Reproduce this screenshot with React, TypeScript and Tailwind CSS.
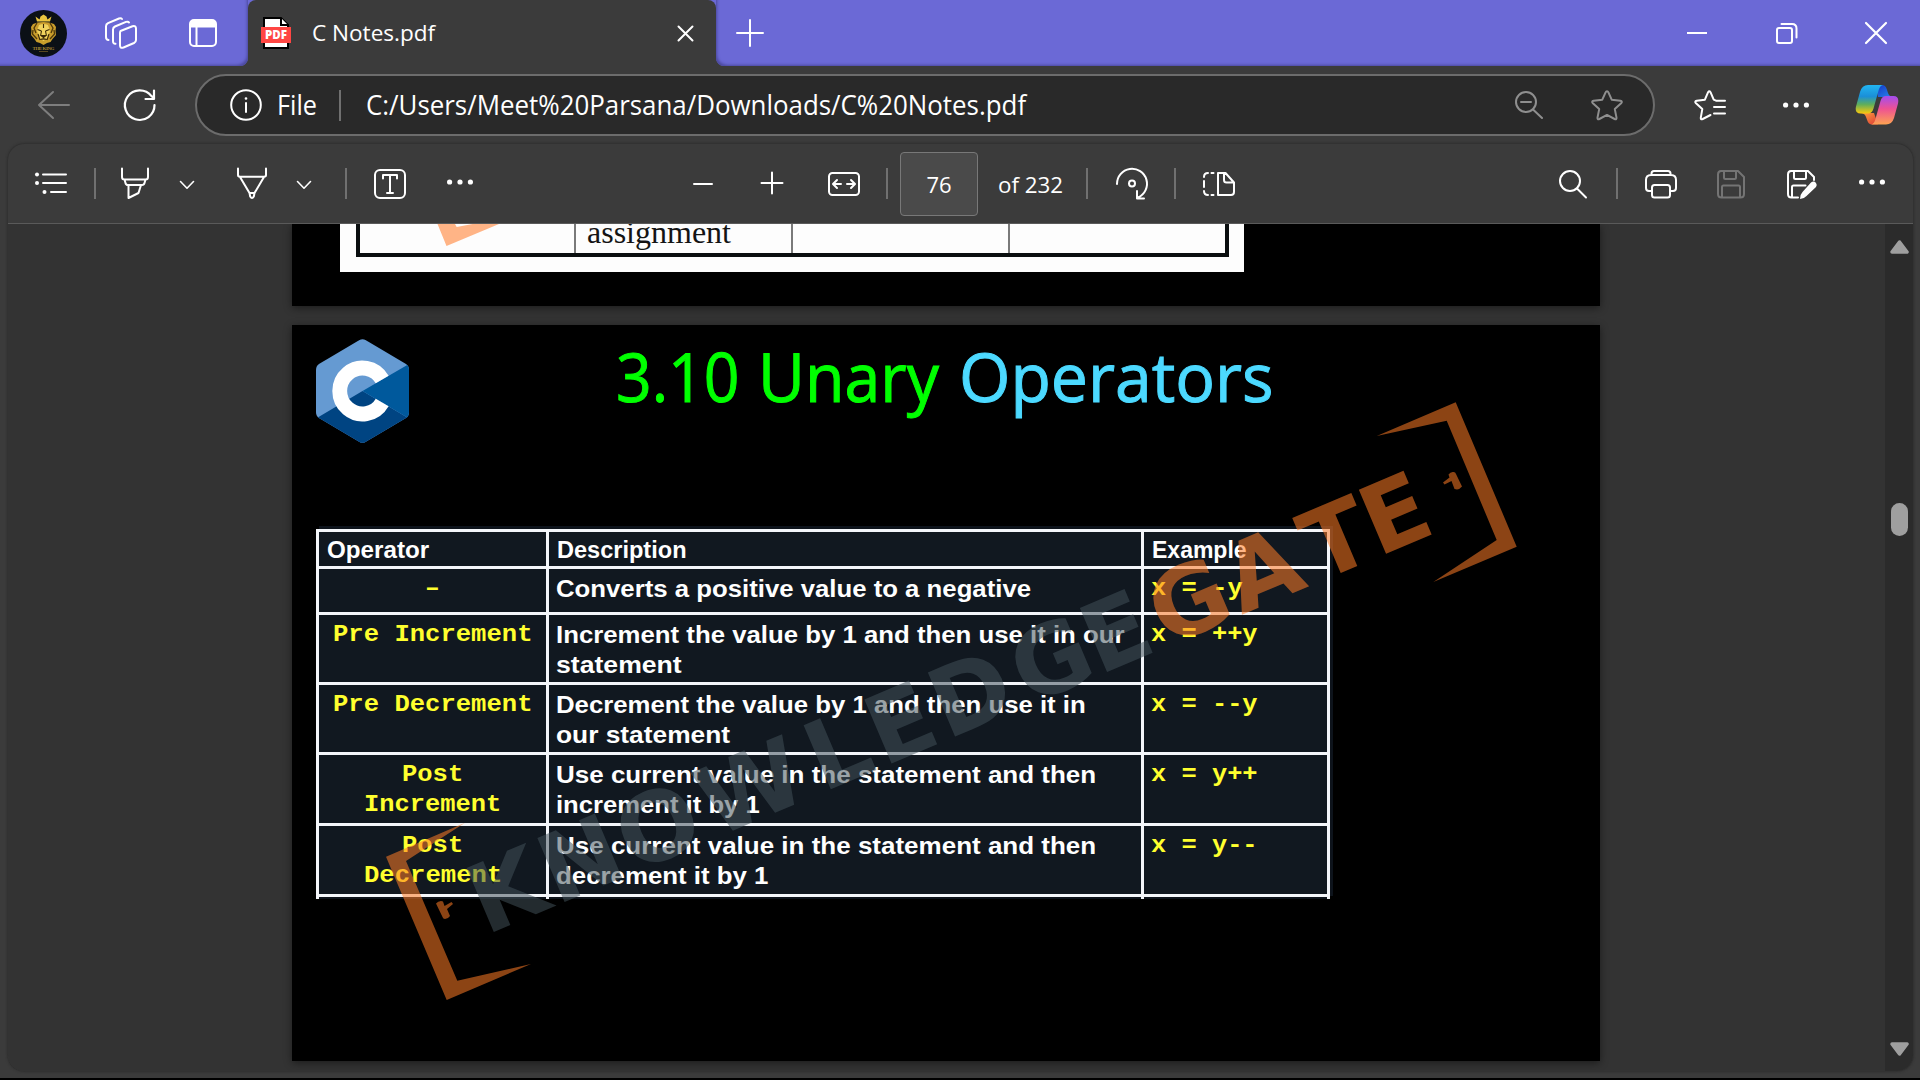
import { useLayoutEffect, useRef, useState, type ReactNode } from "react";

/* Text stretched horizontally so that it fills exactly `w` pixels. */
function Fit({ w, className = "", children }: { w: number; className?: string; children: ReactNode }) {
  const ref = useRef<HTMLSpanElement>(null);
  const [scale, setScale] = useState(1);
  useLayoutEffect(() => {
    if (ref.current && ref.current.offsetWidth) setScale(w / ref.current.offsetWidth);
  }, [w]);
  return (
    <span className={`block shrink-0 ${className}`} style={{ width: w }}>
      <span ref={ref} className="inline-block origin-left whitespace-nowrap" style={{ transform: `scaleX(${scale})` }}>
        {children}
      </span>
    </span>
  );
}

function Icon({
  w,
  h,
  className = "",
  sw = 2,
  children,
}: {
  w: number;
  h: number;
  className?: string;
  sw?: number;
  children: ReactNode;
}) {
  return (
    <svg
      width={w}
      height={h}
      viewBox={`0 0 ${w} ${h}`}
      fill="none"
      stroke="currentColor"
      strokeWidth={sw}
      strokeLinecap="round"
      strokeLinejoin="round"
      className={`shrink-0 overflow-visible ${className}`}
    >
      {children}
    </svg>
  );
}

function Dots({ className = "" }: { className?: string }) {
  return (
    <Icon w={26} h={6} className={className}>
      <g fill="currentColor" stroke="none">
        <circle cx="2.6" cy="3" r="2.6" />
        <circle cx="13" cy="3" r="2.6" />
        <circle cx="23.4" cy="3" r="2.6" />
      </g>
    </Icon>
  );
}

function Sep({ className = "" }: { className?: string }) {
  return <div className={`h-[31px] w-[2px] shrink-0 bg-[#707070] ${className}`} />;
}

function Avatar() {
  return (
    <svg width="47" height="47" viewBox="0 0 47 47" className="ml-5 shrink-0">
      <circle cx="23.5" cy="23.5" r="23.5" fill="#0b1016" />
      <path d="M15.500 6.500l4 3 1-3 3-2 3 2 1 3 4-3-1.500 5H17z" fill="#e9c53f" />
      <path
        d="M13 14q4-2 10.500-2t10.500 2l2 3-.5 4 .5 4-3.500 4-2 3-3.500 1-3.500 2-3.500-2-3.500-1-2-3-3.500-4 .5-4-.5-4z"
        fill="#c99d2c"
      />
      <path d="M13 20l-.5 4 4.500 5M34 20l.5 4-4.500 5M17 13l-3 5 2 5M30 13l3 5-2 5" stroke="#4d380b" strokeWidth="1.300" fill="none" />
      <path d="M19 15q4.500-2 9 0l2 6-2.500 7-4 3-4-3-2.500-7z" fill="#f0d35e" />
      <path
        d="M17.500 19.500l4 1.500M29.500 19.500l-4 1.500M23.500 14v4M21.500 21l-.8 4M25.500 21l.8 4M21 25.500h5l-2.500 2zM20.500 29.500q3-1.500 6 0M18 24l2 6M29 24l-2 6"
        stroke="#3a2908"
        strokeWidth="1.100"
        fill="#3a2908"
      />
      <text x="23.500" y="40" textAnchor="middle" fontSize="5" fontWeight="700" fontFamily="Liberation Serif, serif" fill="#a68330" textLength="22">
        THE KING
      </text>
      <path d="M19 41.500h9" stroke="#6b5524" strokeWidth=".8" />
    </svg>
  );
}

function PdfIcon() {
  return (
    <svg width="30" height="32" viewBox="0 0 30 32" className="ml-[13px] shrink-0">
      <path d="M3 1h17l7 7v23H3z" fill="#fff" stroke="#000" strokeWidth="2" />
      <path d="M20 1v7h7" fill="#fff" stroke="#000" strokeWidth="2" />
      <path d="M0 10h30v16H0z" fill="#ff4643" />
      <text x="15" y="22.300" textAnchor="middle" fontSize="11.500" fontWeight="800" fontFamily="Open Sans, sans-serif" fill="#fff" textLength="22">
        PDF
      </text>
    </svg>
  );
}

function Copilot() {
  return (
    <svg width="44" height="40" viewBox="0 0 44 40" className="ml-[46px] shrink-0">
      <defs>
        <linearGradient id="cpBlue" x1="0" y1="0" x2="0" y2="1">
          <stop offset="0" stopColor="#22b5f2" />
          <stop offset=".4" stopColor="#1a8fd8" />
          <stop offset=".68" stopColor="#5fae5c" />
          <stop offset="1" stopColor="#fbc90c" />
        </linearGradient>
        <linearGradient id="cpPink" x1="0" y1="0" x2="0" y2="1">
          <stop offset="0" stopColor="#a34df0" />
          <stop offset=".45" stopColor="#ee5293" />
          <stop offset="1" stopColor="#fda351" />
        </linearGradient>
        <linearGradient id="cpNavy" x1="0" y1="0" x2="1" y2="1">
          <stop offset="0" stopColor="#1636c4" />
          <stop offset="1" stopColor="#2787ee" />
        </linearGradient>
        <linearGradient id="cpRed" x1="0" y1="0" x2="1" y2="1">
          <stop offset="0" stopColor="#ffa23c" />
          <stop offset="1" stopColor="#dc3a38" />
        </linearGradient>
      </defs>
      <path d="M21 0h6q3.500 0 4.700 4l1.300 4q1 3.500 5 4H23z" fill="url(#cpNavy)" />
      <path d="M23 39.500h-6q-3.500 0-4.700-4L11 32q-1-3.500-5-4h13z" fill="url(#cpRed)" />
      <path d="M13 0h15q-3 .5-4.300 5L18.500 23.500q-1.400 5-5.500 5H5.500Q-.5 28.500 1 21.500L5 7Q7 0 13 0z" fill="url(#cpBlue)" />
      <path d="M31 39.500H16q3-.5 4.300-5L25.500 16q1.400-5 5.500-5h7.500q6 0 4.500 7.500L39 33q-2 6.500-8 6.500z" fill="url(#cpPink)" />
    </svg>
  );
}

function TabStrip() {
  return (
    <header className="flex h-[66px] shrink-0 items-center bg-[#3b3b3b]">
      <div className="flex h-full w-[248px] shrink-0 items-center rounded-br-[8px] bg-[#6b69d6] shadow-[inset_-3px_-3px_3px_-2px_#4a489c]">
        <Avatar />
        <Icon w={32} h={32} className="ml-[38px]">
          <path d="M15.500 14L27.500 9.300q3.500-1 3.500 2.200V23q0 2-2 3L18.500 30.500q-3.500 1.200-3.500-2V16q0-1.200.5-2z" />
          <path d="M24 5.500q-.8-1.300-3-.6L10 9.500q-2 1-2 3V24q0 3 2.500 2.800" />
          <path d="M17 2q-1-1.300-3-.5L3 6.200q-2 1-2 3V20q0 2.800 2.500 3" />
        </Icon>
        <Icon w={28} h={28} className="ml-[52px]">
          <rect x="1" y="1" width="26" height="26" rx="4" />
          <path d="M1 7.500V5q0-4 4-4h18q4 0 4 4v2.500z" fill="currentColor" stroke="none" />
          <path d="M1 7.500h26M7.500 8v19" />
        </Icon>
      </div>
      <div className="-mr-[12px] h-[12px] w-[12px] shrink-0 self-start bg-[#6b69d6]">
        <div className="h-full w-full rounded-tl-[8px] bg-[#3b3b3b]" />
      </div>
      <div className="flex h-full w-[468px] shrink-0 items-center">
        <PdfIcon />
        <Fit w={123} className="mb-[2px] ml-[21px] text-[22px] leading-[30px]">
          C Notes.pdf
        </Fit>
        <Icon w={15} h={15} className="ml-[243px]">
          <path d="M.5.500l14 14M14.500.500l-14 14" />
        </Icon>
      </div>
      <div className="-ml-[12px] h-[12px] w-[12px] shrink-0 self-start bg-[#6b69d6]">
        <div className="h-full w-full rounded-tr-[8px] bg-[#3b3b3b]" />
      </div>
      <div className="flex h-full grow items-center rounded-bl-[8px] bg-[#6b69d6] shadow-[inset_3px_-3px_3px_-2px_#4a489c]">
        <Icon w={26} h={26} className="ml-[21px]">
          <path d="M13 0v26M0 13h26" />
        </Icon>
        <Icon w={20} h={20} className="ml-auto">
          <path d="M0 10h20" strokeLinecap="butt" />
        </Icon>
        <Icon w={21} h={20} className="ml-[69px]">
          <rect x="1" y="5" width="15" height="15" rx="2" />
          <path d="M5.500 1H16q4.500 0 4.500 4.500v9" />
        </Icon>
        <Icon w={20} h={20} className="ml-[69px] mr-[34px]" sw={2.2}>
          <path d="M0 0l20 20M20 0L0 20" />
        </Icon>
      </div>
    </header>
  );
}

function AddressBar() {
  return (
    <div className="flex h-[78px] shrink-0 items-center bg-[#3b3b3b]">
      <Icon w={32} h={28} className="ml-[38px] text-[#7e7e7e]">
        <path d="M31 14H1M15 1L1 14l14 13" />
      </Icon>
      <Icon w={32} h={32} className="ml-[54px]" sw={2.2}>
        <path d="M30.500 16A14.800 14.800 0 1 1 27.500 7.200l2.500 2M30 1.500V10h-8.500" />
      </Icon>
      <div className="ml-[39px] flex h-[62px] w-[1460px] shrink-0 items-center rounded-full border-2 border-[#6c6c6c] bg-[#292929]">
        <Icon w={32} h={32} className="ml-[33px]">
          <circle cx="16" cy="16" r="14.800" />
          <path d="M16 14v9" />
          <circle cx="16" cy="9.500" r=".6" fill="currentColor" strokeWidth="1.500" />
        </Icon>
        <Fit w={40} className="ml-[15px] text-[26.500px] leading-[36px]">
          File
        </Fit>
        <Sep className="ml-[22px]" />
        <Fit w={660} className="ml-[25px] text-[26.500px] leading-[36px]">
          C:/Users/Meet%20Parsana/Downloads/C%20Notes.pdf
        </Fit>
        <Icon w={28} h={28} className="ml-auto text-[#8f8f8f]">
          <circle cx="11" cy="11" r="10" />
          <path d="M18 18.500l9 8.500M6 11h10" />
        </Icon>
        <Icon w={32} h={31} className="ml-[48px] mr-[30px] text-[#8f8f8f]">
          <path d="M16 1.200q.9 0 1.300 1l3.400 7.500 8.700 1.100q2.500.6.700 2.400l-6.300 5.900 1.700 8.500q.2 2.300-1.900 1.400L16 24.900 8.400 29q-2.100.9-1.900-1.400l1.700-8.500-6.300-5.900q-1.800-1.800.7-2.400l8.700-1.100 3.400-7.500q.4-1 1.300-1z" />
        </Icon>
      </div>
      <Icon w={32} h={31} className="ml-[39px]">
        <path d="M16.500 25L8.700 29q-2.200.9-1.900-1.400l1.500-8.500-6.300-5.900q-1.800-1.800.7-2.400l8.200-1.100 3.200-7.500q1.200-2 2.400 0l3.200 7.500 2.300 1H31M20 17h11M20 23.500h11" />
      </Icon>
      <Dots className="ml-[57px]" />
      <Copilot />
    </div>
  );
}

function Chevron({ className = "" }: { className?: string }) {
  return (
    <Icon w={14} h={8} sw={1.600} className={className}>
      <path d="M.5.500L7 7.200 13.500.500" />
    </Icon>
  );
}

const DISK = "M4 1h17l6 6v17q0 3.500-3.500 3.500h-19Q1 27.500 1 24V4.500Q1 1 4 1zM7 1v6.500q0 1.500 1.500 1.500h9Q19 9 19 7.500V1M5 27V17q0-1.500 1.500-1.500h15q1.500 0 1.500 1.500v10";

function Toolbar() {
  return (
    <div className="flex h-[80px] shrink-0 items-center border-b border-[#5a5a5a]">
      <Icon w={32} h={22} className="mb-[2px] ml-[27px]">
        <path d="M8 2.500h23M8 11h23M16 20h15" />
        <g fill="currentColor" stroke="none">
          <circle cx="2" cy="2.500" r="2" />
          <circle cx="2" cy="11" r="2" />
          <circle cx="9.500" cy="20" r="2" />
        </g>
      </Icon>
      <Sep className="ml-[27px]" />
      <Icon w={28} h={31} className="ml-[25px]">
        <path d="M1 .5V9q0 2.500 2.500 2.500h21Q27 11.500 27 9V.5M3.500 11.500l1 3.500q.4 2 2.500 2h14q2 0 2.500-2l1-3.500M7.500 17v13l10-5 2.500-8" />
      </Icon>
      <Chevron className="ml-[31px] mt-[2px]" />
      <Icon w={30} h={31} className="ml-[43px]">
        <path d="M1 .5V7q0 1.800 2 1.800h24Q29 8.800 29 7V.5M3 9l9.500 16h5L27 9M12.500 25l.7 3.500q1.800 3 3.600 0l.7-3.500" />
      </Icon>
      <Chevron className="ml-[30px] mt-[2px]" />
      <Sep className="ml-[34px]" />
      <Icon w={32} h={28} className="ml-[27px]">
        <rect x="1" y="0" width="30" height="28" rx="5" />
        <path d="M9 8.500V5h14v3.500M16 5v18M13 23h6" />
      </Icon>
      <Dots className="mb-[4px] ml-[41px]" />

      <Icon w={20} h={20} className="ml-[220px]">
        <path d="M1 10h18" />
      </Icon>
      <Icon w={22} h={22} className="mb-[2px] ml-[48px]">
        <path d="M11 .5v21M.5 11h21" />
      </Icon>
      <Icon w={32} h={24} className="ml-[45px]">
        <rect x="1" y="1" width="30" height="22" rx="3.500" />
        <path d="M13 12H5.500M9 8l-4 4 4 4M19 12h7.500M23 8l4 4-4 4" />
      </Icon>
      <Sep className="ml-[26px]" />
      <div className="ml-[12px] flex h-[64px] w-[78px] shrink-0 items-center justify-center rounded-[4px] border border-[#787878] bg-[#4a4a4a]">
        <Fit w={25} className="text-[22px] leading-[30px]">
          76
        </Fit>
      </div>
      <Fit w={65} className="ml-[20px] text-[22px] leading-[30px]">
        of 232
      </Fit>
      <Sep className="ml-[23px]" />
      <Icon w={32} h={31} className="ml-[28px]">
        <path d="M1 16A15 15 0 1 1 22 29.500M21 23v7.500h7" />
        <circle cx="16" cy="15.500" r="3" />
      </Icon>
      <Sep className="ml-[26px]" />
      <Icon w={32} h={24} className="ml-[27px]">
        <path d="M15 1v22h13q3 0 3-3V10.500L22.500 1zM21 1v7q0 2.500 2.500 2.500H31" />
        <path d="M5 1Q1 1 1 5M1 9v6M1 19q0 4 4 4M8.500 1h2M8.500 23h2" />
      </Icon>

      <Icon w={28} h={28} className="ml-auto">
        <circle cx="11" cy="11" r="10" />
        <path d="M18 18.500l9 9" />
      </Icon>
      <Sep className="ml-[29px]" />
      <Icon w={32} h={28} className="ml-[27px]">
        <path d="M7 21H4q-3 0-3-3V10q0-5 5-5h20q5 0 5 5v8q0 3-3 3h-3M6.500 5V3.500Q6.500 1 9 1h14q2.500 0 2.500 2.500V5" />
        <rect x="7" y="15" width="18" height="12.500" rx="2.500" />
      </Icon>
      <Icon w={28} h={28} className="ml-[40px] text-[#747474]">
        <path d={DISK} />
      </Icon>
      <Icon w={30} h={28} className="ml-[42px]">
        <path d="M11 27.500H4.500Q1 27.500 1 24V4.500Q1 1 4 1h17l6 6v3M7 1v6.500q0 1.500 1.500 1.500h9Q19 9 19 7.500V1M5 27V17q0-1.500 1.500-1.500h12" />
        <path d="M24 12.500q3-2 5 .5 1.500 2 0 4L19.500 26q-2 2.500-6.500 3 0-4.500 2.500-7z" fill="currentColor" stroke="none" />
      </Icon>
      <Dots className="mb-[4px] ml-[42px] mr-[28px]" />
    </div>
  );
}

function CLogo() {
  return (
    <svg width="93" height="104" viewBox="0 0 94 104" preserveAspectRatio="none" className="ml-[24px] shrink-0">
      <clipPath id="hex">
        <path d="M44 1q3-1.700 6 0l41 24q3 2 3 6v42q0 4-3 6L50 103q-3 1.700-6 0L3 79q-3-2-3-6V31q0-4 3-6z" />
      </clipPath>
      <g clipPath="url(#hex)">
        <path d="M0 0h94v104H0z" fill="#659ad2" />
        <path d="M0 79.500L47 52l47 27.500V104H0z" fill="#004482" />
        <path d="M47 52L94 25v54.500z" fill="#00599c" />
        <path d="M66.900 40.500A23 23 0 1 0 66.900 63.500" fill="none" stroke="#fff" strokeWidth="15" />
      </g>
    </svg>
  );
}

function PreviousSlide() {
  return (
    <div className="ml-[284px] flex h-[82px] w-[1308px] shrink-0 bg-black pl-[48px] shadow-[0_2px_8px_#0007]">
      <div className="h-[48px] w-[904px] bg-[#fdfdfd] pl-[16px] pr-[15px]">
        <div className="flex h-[33px] border-x-[4px] border-b-[4px] border-[#0a0e0f]">
          <div className="w-[216px] border-r-2 border-[#7a7a7a]">
            <svg width="200" height="24" viewBox="360 224 200 24">
              <path d="M437.500 224L446.500 246 499 224H472.600L456.700 227 455 224z" fill="#ffb486" />
            </svg>
          </div>
          <div className="w-[217px] border-r-2 border-[#7a7a7a]">
            <Fit w={144} className="-mt-[8px] ml-[11px] font-['Liberation_Serif',serif] text-[32px] leading-[32px] text-[#141414]">
              assignment
            </Fit>
          </div>
          <div className="w-[217px] border-r-2 border-[#7a7a7a]" />
        </div>
      </div>
    </div>
  );
}

type Line = [string, number];
const ROWS: { op: Line[]; desc: Line[]; ex: Line }[] = [
  { op: [["–", 15]], desc: [["Converts a positive value to a negative", 475]], ex: ["x = -y", 92] },
  {
    op: [["Pre Increment", 199]],
    desc: [["Increment the value by 1 and then use it in our", 568], ["statement", 126]],
    ex: ["x = ++y", 107],
  },
  {
    op: [["Pre Decrement", 199]],
    desc: [["Decrement the value by 1 and then use it in", 530], ["our statement", 174]],
    ex: ["x = --y", 107],
  },
  {
    op: [["Post", 61], ["Increment", 137]],
    desc: [["Use current value in the statement and then", 540], ["increment it by 1", 204]],
    ex: ["x = y++", 107],
  },
  {
    op: [["Post", 61], ["Decrement", 138]],
    desc: [["Use current value in the statement and then", 540], ["decrement it by 1", 213]],
    ex: ["x = y--", 107],
  },
];

function OperatorTable() {
  return (
    <div className="ml-[24px] mt-[86px] grid w-[1014px] grid-cols-[227px_592px_183px] grid-rows-[34px_43px_67px_67px_68px_68px_2px] gap-[3px] bg-[#f4f6fa] px-[3px] pt-[3px] font-['Liberation_Sans',sans-serif] text-[24.5px] font-bold leading-[30.5px] text-white shadow-[3px_-3px_0_#0d131b]">
      {(
        [
          ["Operator", 102],
          ["Description", 130],
          ["Example", 95],
        ] as Line[]
      ).map(([t, w]) => (
        <div key={t} className="bg-[#111820] pl-[8px] pt-[3px] text-[23px]">
          <Fit w={w}>{t}</Fit>
        </div>
      ))}
      {ROWS.map((r, i) => [
        <div
          key={`o${i}`}
          className="flex flex-col items-center bg-[#111820] pt-[4.5px] font-['Liberation_Mono',monospace] text-[23px] text-[#ffff2e]"
        >
          {r.op.map(([t, w]) => (
            <Fit key={t} w={w}>
              {t}
            </Fit>
          ))}
        </div>,
        <div key={`d${i}`} className="bg-[#111820] pl-[7px] pt-[4.5px]">
          {r.desc.map(([t, w]) => (
            <Fit key={t} w={w}>
              {t}
            </Fit>
          ))}
        </div>,
        <div key={`e${i}`} className="bg-[#111820] pl-[7px] pt-[4.5px] font-['Liberation_Mono',monospace] text-[23px] text-[#ffff2e]">
          <Fit w={r.ex[1]}>{r.ex[0]}</Fit>
        </div>,
      ])}
      <div className="bg-[#0d131b]" />
      <div className="bg-[#0d131b]" />
      <div className="bg-[#0d131b]" />
    </div>
  );
}

function Watermark() {
  return (
    <svg width="1308" height="736" viewBox="292 325 1308 736" className="pointer-events-none absolute left-0 top-0">
      <g fill="#ff7c26" opacity=".55">
        <path d="M465 822.700L386 856.700 446.700 1000 531 964 457.300 980.700 406 861z" />
        <path d="M1376.700 436L1455.700 402.300 1516.700 546.700 1433.300 582 1496.700 540 1446.700 420.700z" />
        <path d="M436 903.500q2-2.500 5-2.500l2 .5 1.500 4.500 7-4 1.500 2-6 5 3 7q-2 3-5 3-2 0-2.500-2z" />
        <path d="M1462 486.500q-2 2.500-5 3l-2.500-.5-3-8-7 3.500-1.500-2 6.500-5-1-3q2-3 5-2.500 2 0 2.500 2z" />
      </g>
      <g transform="translate(494 932) rotate(-22.970)" fontFamily="DejaVu Sans, sans-serif" fontWeight="700" fontSize="95.500">
        <text y="0" x="-9 68 151.500 240 357 423 492 580 657" fill="#42525a" opacity=".53">
          KNOWLEDGE
        </text>
        <text y="0" x="730 812 896 960" fill="#ff7c26" opacity=".55">
          GATE
        </text>
      </g>
    </svg>
  );
}

function Slide() {
  return (
    <div className="relative ml-[284px] mt-[19px] h-[736px] w-[1308px] shrink-0 bg-black pt-[14px] shadow-[0_2px_8px_#0007]">
      <div className="flex h-[104px] items-start">
        <CLogo />
        <div className="ml-[207px] mt-[3px] flex gap-[20px] text-[68px] leading-[68px] text-[#00ff00] [-webkit-text-stroke:1px_currentColor]">
          <div className="flex gap-[18px]">
            <Fit w={124}>3.10</Fit>
            <Fit w={181}>Unary</Fit>
          </div>
          <Fit w={315} className="text-[#4cd9ff]">
            Operators
          </Fit>
        </div>
      </div>
      <OperatorTable />
      <Watermark />
    </div>
  );
}

function Scrollbar() {
  return (
    <div className="flex w-[28px] shrink-0 flex-col items-center bg-[#2b2b2b] text-[#9f9f9f]">
      <svg width="19" height="14" viewBox="0 0 19 14" className="mt-[16px]">
        <path d="M9.500 2L17 12H2z" fill="currentColor" stroke="currentColor" strokeWidth="3.500" strokeLinejoin="round" />
      </svg>
      <div className="mt-[249px] h-[33px] w-[17px] rounded-full bg-[#9f9f9f]" />
      <svg width="19" height="14" viewBox="0 0 19 14" className="mb-[15px] mt-auto">
        <path d="M9.500 12L17 2H2z" fill="currentColor" stroke="currentColor" strokeWidth="3.500" strokeLinejoin="round" />
      </svg>
    </div>
  );
}

export default function App() {
  return (
    <div className="flex h-[1080px] w-[1920px] flex-col overflow-hidden border-b-2 border-black bg-[#3b3b3b] font-['Open_Sans',sans-serif] text-white">
      <TabStrip />
      <AddressBar />
      <main className="mx-[8px] mb-[7px] flex w-[1905px] min-h-0 grow flex-col overflow-hidden rounded-[16px] bg-[#3b3b3b] shadow-[0_0_3px_#222]">
        <Toolbar />
        <div className="flex min-h-0 grow">
          <div className="flex min-w-0 grow flex-col overflow-hidden bg-[#333333]">
            <PreviousSlide />
            <Slide />
          </div>
          <Scrollbar />
        </div>
      </main>
    </div>
  );
}
